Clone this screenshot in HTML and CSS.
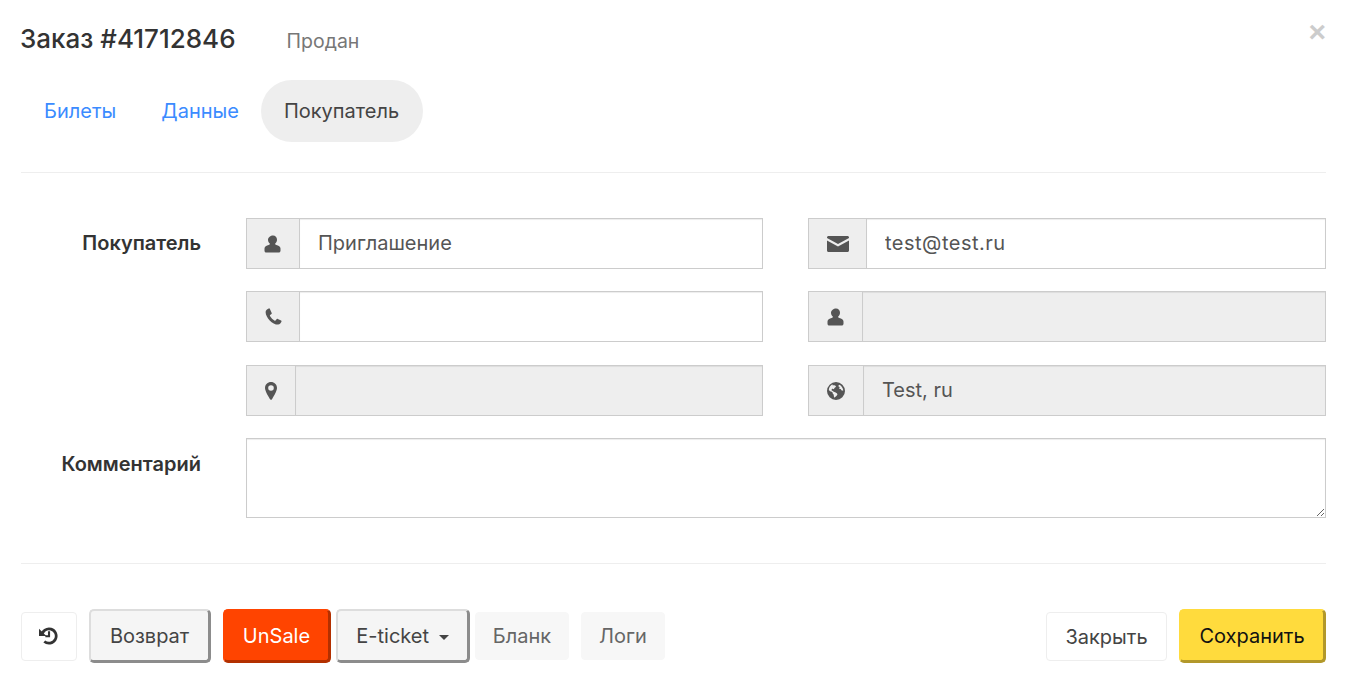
FILE: index.html
```html
<!DOCTYPE html>
<html>
<head>
<title>Заказ #41712846</title>
<link rel="stylesheet" href="styles.css">
</head>
<body>
<svg class="defs" width="0" height="0">
  <symbol id="i-user" viewBox="0 0 18 18">
    <path d="M9 0.5c2.4 0 4 1.900 4 4.300 0 1.700-.8 3.200-2 4 .1 .6 .5 1 1.300 1.200 2.300 .7 4.200 1.400 4.200 3.500v2.200c0 1.100-.8 1.800-1.800 1.800H2.300C1.300 17.500 .5 16.800 .5 15.700v-2.200c0-2.100 1.900-2.800 4.200-3.500 .8-.2 1.200-.6 1.300-1.200-1.200-.8-2-2.300-2-4C4 2.400 6.600 .5 9 .5z"/>
  </symbol>
  <symbol id="i-mail" viewBox="0 0 22 16">
    <path d="M1.500 0h19C21.300 0 22 .7 22 1.500v.6l-11 6-11-6v-.6C0 .7 .7 0 1.500 0zM0 4.600l11 6 11-6v9.900c0 .8-.7 1.500-1.500 1.500h-19C.7 16 0 15.300 0 14.500z"/>
  </symbol>
  <symbol id="i-phone" viewBox="0 0 17 17">
    <path d="M3.800 .4C2.500 .9 .6 2 .6 3.900c0 5.600 6.800 12.700 12.500 12.700 1.800 0 2.900-1.700 3.400-3 .2-.4 0-.8-.4-1l-3.300-1.700c-.4-.2-.8-.1-1 .2l-1.300 1.500c-.2 .2-.5 .3-.8 .1-1.700-1-3.800-3.100-4.700-4.800-.2-.3-.1-.6 .1-.8l1.400-1.200c.3-.3 .4-.7 .2-1L4.800 .8C4.600 .4 4.200 .2 3.800 .4z"/>
  </symbol>
  <symbol id="i-marker" viewBox="0 0 12 18">
    <path fill-rule="evenodd" d="M6 0c3.300 0 6 2.600 6 5.900 0 3.200-3.900 9.400-5.300 11.700-.3 .5-1 .5-1.300 0C3.900 15.300 0 9.100 0 5.900 0 2.600 2.700 0 6 0zm0 3.200a2.800 2.800 0 1 0 0 5.600 2.800 2.800 0 0 0 0-5.600z"/>
  </symbol>
  <symbol id="i-globe" viewBox="0 0 18 18">
    <path fill-rule="evenodd" d="M9 0a9 9 0 1 1 0 18A9 9 0 0 1 9 0zM5.500 2.300C3.500 3.400 2 5.500 1.800 7.900c.8 .9 1.700 1.600 2.900 1.900 .7 .2 1 .7 1 1.400 0 .7 .4 1.100 1 1.400 .1 1 .1 2 .5 2.800 .7 .2 1.200-.2 1.500-.8 .5-.8 1.400-1.300 1.700-2.200 .2-.7-.5-1.100-1-1.500-.7-.6-1.700-1.100-2.700-1.200-.5-.6-1.100-1.200-1.900-1.300-.3-.6-.2-1.300 .4-1.700 .7-.2 1.200 .1 1.600 .5 .5-.6 .6-1.400 1.300-1.800 .5-.4 1-.9 .8-1.500-.9-.5-2-.6-3.400-.6zM12.500 2.700c-.6 .3-1.200 .8-1.100 1.500 .3 .4 .9 .4 1.200 .9 .1 .6-.4 1-.3 1.600 .5 .3 1.200 .1 1.600 .6 .2 .6 .6 1.200 1.300 1.300 .4 .1 .8-.1 1.100 0-.3-2.500-1.700-4.700-3.800-5.900z"/>
  </symbol>
</svg>

<div class="order">
  <div class="order-head">
    <h1>Заказ #41712846</h1>
    <span class="status">Продан</span>
    <span class="close">&times;</span>
  </div>

  <div class="tabs">
    <a class="tab">Билеты</a>
    <a class="tab">Данные</a>
    <a class="tab active">Покупатель</a>
  </div>

  <form class="form">
    <div class="label">Покупатель</div>
    <div class="fields">
      <div class="group">
        <span class="addon addon-wide"><svg class="icon icon-user"><use href="#i-user"/></svg></span>
        <input class="control" value="Приглашение">
      </div>
      <div class="group">
        <span class="addon addon-mail"><svg class="icon icon-mail"><use href="#i-mail"/></svg></span>
        <input class="control control-mail" value="test@test.ru">
      </div>
      <div class="group">
        <span class="addon addon-wide"><svg class="icon icon-phone"><use href="#i-phone"/></svg></span>
        <input class="control">
      </div>
      <div class="group">
        <span class="addon addon-small"><svg class="icon icon-user"><use href="#i-user"/></svg></span>
        <input class="control" disabled>
      </div>
      <div class="group">
        <span class="addon addon-marker"><svg class="icon icon-marker"><use href="#i-marker"/></svg></span>
        <input class="control" disabled>
      </div>
      <div class="group">
        <span class="addon addon-globe"><svg class="icon icon-globe"><use href="#i-globe"/></svg></span>
        <input class="control" value="Test, ru" disabled>
      </div>
    </div>

    <div class="label label-comment">Комментарий</div>
    <textarea class="comment"></textarea>
  </form>

  <div class="actions">
    <button class="btn btn-icon" type="button">
      <svg class="history" viewBox="0 0 18 18"><path d="M2.700 9A6.800 6.800 0 1 1 5 14.600" fill="none" stroke="currentColor" stroke-width="2.600"/><path d="M0 2.500v7h7z" fill="currentColor"/><path d="M9.500 5v4.700H6" fill="none" stroke="currentColor" stroke-width="2"/></svg>
    </button>
    <button class="btn btn-raised btn-return" type="button">Возврат</button>
    <button class="btn btn-raised btn-unsale" type="button">UnSale</button>
    <button class="btn btn-raised btn-ticket" type="button">E-ticket <span class="caret"></span></button>
    <button class="btn btn-flat btn-blank" type="button">Бланк</button>
    <button class="btn btn-flat btn-logs" type="button">Логи</button>
    <button class="btn btn-close" type="button">Закрыть</button>
    <button class="btn btn-raised btn-save" type="button">Сохранить</button>
  </div>
</div>
</body>
</html>
```

FILE: styles.css
```css
* {
  box-sizing: border-box;
}

html, body {
  margin: 0;
  padding: 0;
  background: #fff;
}

body {
  font: normal 20px Inter, "Noto Sans", sans-serif;
  color: #444;
  overflow: hidden;
}

.defs {
  position: absolute;
}

.order {
  width: 1345px;
  height: 682px;
  padding: 0 19px 0 21px;
}

.order-head {
  display: flex;
  align-items: center;
  height: 80px;
}

h1 {
  font: 500 26px Inter, "Noto Sans", sans-serif;
  color: #333;
  margin: 0 0 3px -1px;
}

.status {
  margin-left: 51px;
  color: #777;
  font-size: 19.500px;
  padding-top: 2px;
}

.close {
  margin-left: auto;
  margin-top: -16px;
  color: #ccc;
  font: bold 30px "Liberation Sans", sans-serif;
}

.tabs {
  display: flex;
  height: 93px;
  padding-bottom: 31px;
  border-bottom: 1px solid #eee;
}

.tab {
  height: 62px;
  line-height: 62px;
  padding: 0 23px;
  border-radius: 31px;
  color: #3b8bff;
}

.tab + .tab {
  margin-left: -1px;
}

.tab.active {
  padding-right: 24px;
  background: #eee;
  color: #444;
}

.form {
  display: grid;
  grid-template-columns: 180px 1080px;
  column-gap: 45px;
  row-gap: 22px;
  padding-top: 45px;
  padding-bottom: 45px;
  border-bottom: 1px solid #eee;
}

.label {
  font-weight: 600;
  text-align: right;
  color: #333;
  padding-top: 13px;
}

.label-comment {
  padding-top: 14px;
}

.fields {
  display: grid;
  grid-template-columns: 517px 518px;
  grid-template-rows: 51px 52px 51px;
  column-gap: 45px;
  row-gap: 22px;
}

.group {
  display: flex;
  height: 51px;
}

.addon {
  flex: none;
  display: flex;
  align-items: center;
  justify-content: center;
  background: #eee;
  border: 1px solid #ccc;
  border-right: 0;
}

.addon-wide {
  width: 53px;
}

.addon-mail {
  width: 58px;
}

.addon-small {
  width: 54px;
}

.addon-marker {
  width: 49px;
}

.addon-globe {
  width: 55px;
}

.icon {
  fill: #555;
}

.icon-user {
  width: 18px;
  height: 18px;
}

.icon-mail {
  width: 22px;
  height: 16px;
}

.icon-phone {
  width: 17px;
  height: 17px;
}

.icon-marker {
  width: 12px;
  height: 18px;
}

.icon-globe {
  width: 18px;
  height: 18px;
}

.control {
  flex: 1;
  min-width: 0;
  height: 51px;
  padding: 0 18px 2px;
  border: 1px solid #ccc;
  box-shadow: inset 0 1px 1px rgba(0, 0, 0, .075);
  font: inherit;
  color: #555;
  background: #fff;
  outline: none;
  border-radius: 0;
}

.control-mail {
  letter-spacing: .5px;
}

.control:disabled {
  background: #eee;
  color: #555;
}

.comment {
  display: block;
  height: 80px;
  border: 1px solid #ccc;
  box-shadow: inset 0 1px 1px rgba(0, 0, 0, .075);
  border-radius: 0;
  outline: none;
  font: inherit;
}

.actions {
  display: flex;
  align-items: flex-start;
  padding-top: 45px;
}

.btn {
  height: 49px;
  margin-top: 3px;
  padding: 0;
  border: 1px solid #eee;
  border-radius: 4px;
  background: #fff;
  font: inherit;
  color: #444;
}

.btn-icon {
  width: 56px;
  padding-bottom: 2px;
  padding-right: 2px;
  color: #333;
  margin-right: 12px;
}

.history {
  display: block;
  width: 19px;
  height: 19px;
  margin: 0 auto;
}

.btn-raised {
  height: 54px;
  margin-top: 0;
  border-width: 2px 3px 3px 2px;
  border-style: solid;
  border-radius: 5px;
}

.btn-return, .btn-ticket {
  background: #f5f5f5;
  border-color: #ddd #8c8c8c #8c8c8c #ddd;
}

.btn-return {
  width: 122px;
  margin-right: 12px;
}

.btn-unsale {
  width: 108px;
  margin-right: 5px;
  background: #ff4400;
  border-color: #ff4400 #b33000 #b33000 #ff4400;
  color: #fff;
}

.btn-ticket {
  width: 134px;
  margin-right: 5px;
}

.caret {
  display: inline-block;
  margin-left: 4px;
  vertical-align: middle;
  border-top: 5px solid #444;
  border-left: 5.500px solid transparent;
  border-right: 5.500px solid transparent;
}

.btn-flat {
  height: 48px;
  background: #f7f7f7;
  border-color: #f7f7f7;
  color: #666;
}

.btn-blank {
  width: 94px;
  margin-right: 12px;
}

.btn-logs {
  width: 84px;
}

.btn-close {
  width: 121px;
  margin-left: auto;
  margin-right: 12px;
}

.btn-save {
  width: 147px;
  background: #ffdb3d;
  border-color: #ffdb3d #b2982a #b2982a #ffdb3d;
  color: #111;
}
```
